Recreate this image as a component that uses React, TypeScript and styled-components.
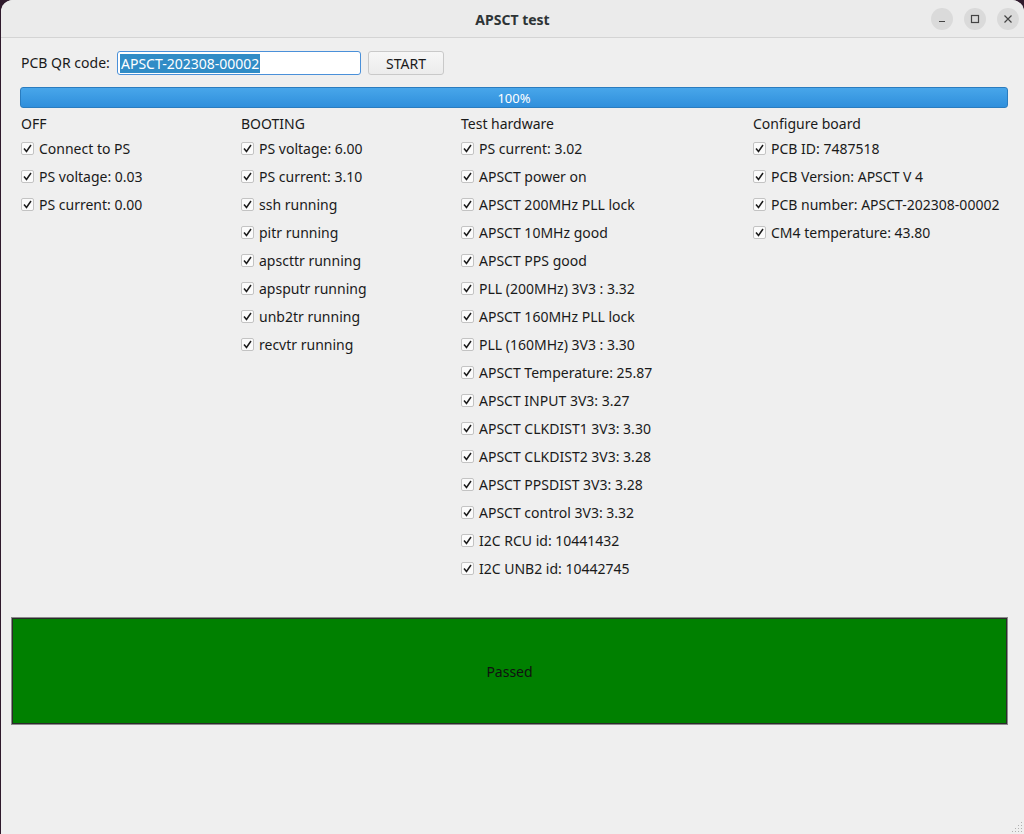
import React from "react";
import styled, { createGlobalStyle } from "styled-components";

const Global = createGlobalStyle`
  html, body { margin: 0; padding: 0; background: #2f1a2c; }
  body { font-family: "Noto Sans", "Open Sans", sans-serif; }
  #root { width: 1024px; height: 834px; }
`;

const Window = styled.div`
  margin-left: 1px;
  width: 1023px;
  height: 834px;
  background: #efefef;
  border-radius: 12px 12px 0 0;
  overflow: hidden;
  display: flex;
  flex-direction: column;
  position: relative;
`;

const TitleBar = styled.div`
  height: 37px;
  flex: none;
  background: #ebebeb;
  border-bottom: 1px solid #d4d4d4;
  display: flex;
  align-items: center;
  justify-content: center;
  position: relative;
`;

const Title = styled.div`
  font-weight: bold;
  font-size: 14px;
  color: #2e3436;
  margin-top: 1px;
`;

const WinButtons = styled.div`
  position: absolute;
  right: 5px;
  top: 8px;
  display: flex;
  gap: 11px;
`;

const WinButton = styled.div`
  width: 22px;
  height: 22px;
  border-radius: 50%;
  background: #dadada;
  display: flex;
  align-items: center;
  justify-content: center;
`;

const Content = styled.div`
  display: flex;
  flex-direction: column;
  padding: 13px 16px 0 19px;
`;

const TopRow = styled.div`
  display: flex;
  align-items: center;
  height: 24px;
`;

const Label = styled.span`
  font-size: 14px;
  color: #1a1a1a;
  margin-left: 1px;
  margin-top: -1px;
  width: 96px;
`;

const Input = styled.div`
  width: 244px;
  height: 24px;
  box-sizing: border-box;
  border: 1px solid #4a90d9;
  border-radius: 3px;
  background: #ffffff;
  display: flex;
  align-items: center;
  padding-left: 2px;
`;

const Selected = styled.span`
  background: #308cc6;
  color: #ffffff;
  font-size: 14px;
  line-height: 19px;
  padding: 0 1px;
`;

const Button = styled.div`
  margin-left: 7px;
  width: 76px;
  height: 24px;
  box-sizing: border-box;
  border: 1px solid #c9c9c9;
  border-radius: 3px;
  background: linear-gradient(#f7f7f7, #ececec);
  font-size: 14px;
  color: #1a1a1a;
  display: flex;
  align-items: center;
  justify-content: center;
`;

const Progress = styled.div`
  margin-top: 12px;
  height: 21px;
  box-sizing: border-box;
  border: 1px solid #2a7cbf;
  border-radius: 3px;
  background: linear-gradient(#48a6ea, #2f8fdc);
  color: #ffffff;
  font-size: 13px;
  display: flex;
  align-items: center;
  justify-content: center;
`;

const Columns = styled.div`
  display: grid;
  grid-template-columns: 220px 220px 292px 1fr;
  margin-top: 7px;
  margin-left: 1px;
`;

const Column = styled.div`
  display: flex;
  flex-direction: column;
`;

const Heading = styled.div`
  font-size: 14px;
  color: #1a1a1a;
  height: 18px;
  line-height: 18px;
  margin-bottom: 1px;
`;

const Item = styled.div`
  display: flex;
  align-items: center;
  height: 28px;
  font-size: 14px;
  color: #1a1a1a;
`;

const Box = styled.span`
  width: 13px;
  height: 13px;
  box-sizing: border-box;
  border: 1px solid #c3c3c3;
  background: #fbfbfb;
  border-radius: 2px;
  margin-right: 5px;
  display: flex;
  align-items: center;
  justify-content: center;
`;

const Result = styled.div`
  margin: 36px 0 0 11px;
  width: 995px;
  height: 106px;
  box-sizing: border-box;
  background: #008000;
  border: 1px solid #2b2b2b;
  outline: 1px solid #8a8a8a;
  display: flex;
  align-items: center;
  justify-content: center;
  font-size: 14px;
  color: #111111;
`;

const Grip = styled.svg`
  position: absolute;
  right: 1px;
  bottom: 1px;
`;

const Check = () => (
  <Box>
    <svg width="9" height="9" viewBox="0 0 9 9">
      <path d="M1 4.5 L3.5 7.5 L8 1" fill="none" stroke="#1a1a1a" strokeWidth="1.5" />
    </svg>
  </Box>
);

const cols: { title: string; items: string[] }[] = [
  { title: "OFF", items: ["Connect to PS", "PS voltage: 0.03", "PS current: 0.00"] },
  {
    title: "BOOTING",
    items: [
      "PS voltage: 6.00",
      "PS current: 3.10",
      "ssh running",
      "pitr running",
      "apscttr running",
      "apsputr running",
      "unb2tr running",
      "recvtr running",
    ],
  },
  {
    title: "Test hardware",
    items: [
      "PS current: 3.02",
      "APSCT power on",
      "APSCT 200MHz PLL lock",
      "APSCT 10MHz good",
      "APSCT PPS good",
      "PLL (200MHz) 3V3 : 3.32",
      "APSCT 160MHz PLL lock",
      "PLL (160MHz) 3V3 : 3.30",
      "APSCT Temperature: 25.87",
      "APSCT INPUT 3V3: 3.27",
      "APSCT CLKDIST1 3V3: 3.30",
      "APSCT CLKDIST2 3V3: 3.28",
      "APSCT PPSDIST 3V3: 3.28",
      "APSCT control 3V3: 3.32",
      "I2C RCU id: 10441432",
      "I2C UNB2 id: 10442745",
    ],
  },
  {
    title: "Configure board",
    items: [
      "PCB ID: 7487518",
      "PCB Version: APSCT V 4",
      "PCB number: APSCT-202308-00002",
      "CM4 temperature: 43.80",
    ],
  },
];

export default function App() {
  return (
    <>
      <Global />
      <Window>
        <TitleBar>
          <Title>APSCT test</Title>
          <WinButtons>
            <WinButton>
              <svg width="10" height="10" viewBox="0 0 10 10">
                <path d="M2 7.5 H8" stroke="#444" strokeWidth="1.2" />
              </svg>
            </WinButton>
            <WinButton>
              <svg width="10" height="10" viewBox="0 0 10 10">
                <rect x="1.5" y="1.5" width="7" height="7" fill="none" stroke="#444" strokeWidth="1.2" />
              </svg>
            </WinButton>
            <WinButton>
              <svg width="10" height="10" viewBox="0 0 10 10">
                <path d="M1.5 1.5 L8.5 8.5 M8.5 1.5 L1.5 8.5" stroke="#444" strokeWidth="1.2" />
              </svg>
            </WinButton>
          </WinButtons>
        </TitleBar>
        <Content>
          <TopRow>
            <Label>PCB QR code:</Label>
            <Input>
              <Selected>APSCT-202308-00002</Selected>
            </Input>
            <Button>START</Button>
          </TopRow>
          <Progress>100%</Progress>
          <Columns>
            {cols.map((c) => (
              <Column key={c.title}>
                <Heading>{c.title}</Heading>
                {c.items.map((it) => (
                  <Item key={it}>
                    <Check />
                    {it}
                  </Item>
                ))}
              </Column>
            ))}
          </Columns>
        </Content>
        <Result>Passed</Result>
        <Grip width="12" height="12" viewBox="0 0 12 12">
          {[
            [10, 2],
            [10, 5],
            [7, 5],
            [10, 8],
            [7, 8],
            [4, 8],
            [10, 11],
            [7, 11],
            [4, 11],
            [1, 11],
          ].map(([x, y]) => (
            <rect key={`${x}-${y}`} x={x} y={y - 1} width="1" height="1" fill="#b0b0b0" />
          ))}
        </Grip>
      </Window>
    </>
  );
}
